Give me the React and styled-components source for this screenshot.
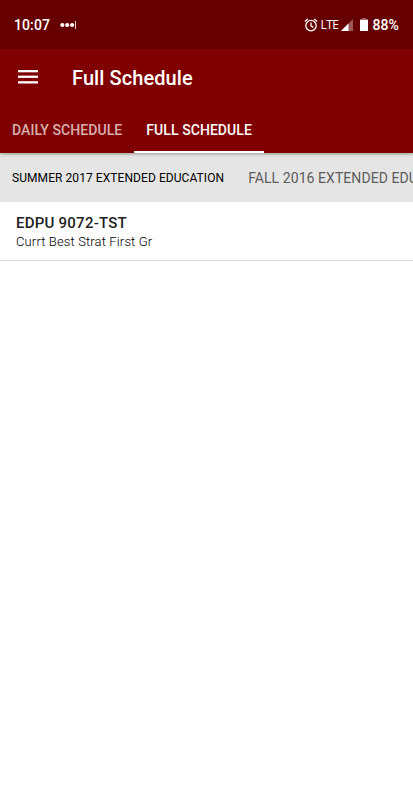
import React from 'react';
import styled, { createGlobalStyle } from 'styled-components';

const GlobalStyle = createGlobalStyle`
  * {
    box-sizing: border-box;
  }

  body {
    margin: 0;
    background: #ffffff;
    font-family: Roboto, "Liberation Sans", sans-serif;
  }
`;

const Screen = styled.div`
  display: flex;
  flex-direction: column;
  height: 800px;
  overflow: hidden;
  background: #ffffff;
`;

const StatusBar = styled.div`
  display: flex;
  align-items: center;
  height: 49px;
  flex-shrink: 0;
  padding: 1px 14px 0;
  background: #660000;
  color: #ffffff;
`;

const StatusText = styled.span`
  font-size: 14px;
  font-weight: 500;
  line-height: 16px;
  letter-spacing: 0.1px;
`;

const NotificationDots = styled.svg`
  margin: 0 0 1px 10px;
`;

const StatusIcons = styled.div`
  display: flex;
  align-items: center;
  margin-left: auto;
`;

const Alarm = styled.svg`
  margin-bottom: 1px;
`;

const Network = styled.span`
  margin: 0 3px 0 2px;
  font-family: "Open Sans", "Noto Sans", sans-serif;
  font-size: 12px;
  line-height: 16px;
  letter-spacing: -0.5px;
`;

const Battery = styled.svg`
  margin: 0 4px 1px 7px;
`;

const AppBar = styled.header`
  display: flex;
  align-items: center;
  height: 56px;
  flex-shrink: 0;
  padding: 0 18px;
  background: #800000;
`;

const MenuButton = styled.button`
  display: flex;
  width: 20px;
  height: 14px;
  padding: 0;
  border: none;
  background: none;
  cursor: pointer;
`;

const Title = styled.h1`
  margin: 1px 0 0 34px;
  color: #ffffff;
  font-size: 20px;
  font-weight: 500;
  line-height: 24px;
  letter-spacing: 0.08px;
`;

const Tabs = styled.nav`
  position: relative;
  display: flex;
  height: 48px;
  flex-shrink: 0;
  background: #800000;
  box-shadow: 0 1px 3px rgba(0, 0, 0, 0.35);
`;

const Tab = styled.button`
  height: 48px;
  padding: 4px 12px 0;
  border: none;
  border-bottom: 2px solid ${({ $active }) => ($active ? '#ffffff' : 'transparent')};
  background: none;
  color: ${({ $active }) => ($active ? '#ffffff' : 'rgba(255, 255, 255, 0.7)')};
  font-family: inherit;
  font-size: 14px;
  font-weight: 500;
  letter-spacing: 0.07px;
  white-space: nowrap;
  cursor: pointer;
`;

const Terms = styled.div`
  display: flex;
  height: 49px;
  flex-shrink: 0;
  overflow: hidden;
  background: #e5e5e5;
`;

const Term = styled.button`
  flex-shrink: 0;
  padding: 1px 12px 0;
  border: none;
  background: none;
  color: ${({ $active }) => ($active ? '#000000' : '#5c5c5c')};
  font-family: inherit;
  font-size: ${({ $active }) => ($active ? '12px' : '14px')};
  letter-spacing: 0.07px;
  white-space: nowrap;
  cursor: pointer;
`;

const Course = styled.div`
  height: 59px;
  padding: 12px 16px 0;
  border-bottom: 1px solid #d6d6d6;
`;

const CourseCode = styled.div`
  color: #212121;
  font-size: 15px;
  font-weight: 500;
  line-height: 18px;
  letter-spacing: 0.24px;
`;

const CourseName = styled.div`
  margin-top: 1px;
  color: #000000;
  font-size: 13px;
  font-weight: 300;
  line-height: 18px;
  letter-spacing: 0.14px;
`;

const tabs = ['DAILY SCHEDULE', 'FULL SCHEDULE'];
const terms = ['SUMMER 2017 EXTENDED EDUCATION', 'FALL 2016 EXTENDED EDUCATION'];
const courses = [{ code: 'EDPU 9072-TST', name: 'Currt Best Strat First Gr' }];

const App = () => {
  const [tab, setTab] = React.useState(1);
  const [term, setTerm] = React.useState(0);

  return (
    <Screen>
      <GlobalStyle />
      <StatusBar>
        <StatusText>10:07</StatusText>
        <NotificationDots width="16" height="8" viewBox="0 0 16 8" fill="#ffffff">
          <circle cx="2.3" cy="4" r="2.1" />
          <circle cx="7.2" cy="4" r="2.1" />
          <circle cx="12.1" cy="4" r="2.1" />
          <rect x="15" y="0" width="1" height="8" opacity="0.8" />
        </NotificationDots>
        <StatusIcons>
          <Alarm width="14" height="14" viewBox="0 0 14 14" fill="none" stroke="#ffffff" strokeWidth="1.3">
            <circle cx="7" cy="7.6" r="5.2" />
            <path d="M0.8 3.4 L3.8 0.9 M13.2 3.4 L10.2 0.9 M7 4.6 V7.8 L9.3 9.4" />
          </Alarm>
          <Network>LTE</Network>
          <svg width="12" height="12" viewBox="0 0 12 12">
            <path d="M0 12 L12 0 V12 Z" fill="#ffffff" opacity="0.35" />
            <path d="M0 12 L7.5 4.5 V12 Z" fill="#ffffff" />
          </svg>
          <Battery width="8" height="13" viewBox="0 0 8 13" fill="#ffffff">
            <path d="M2 0 H6 V1 H8 V2 H0 V1 H2 Z" opacity="0.4" />
            <rect x="0" y="2" width="8" height="11" />
          </Battery>
          <StatusText>88%</StatusText>
        </StatusIcons>
      </StatusBar>
      <AppBar>
        <MenuButton aria-label="Menu">
          <svg width="20" height="14" viewBox="0 0 20 14" fill="#ffffff">
            <rect x="0" y="0" width="20" height="2.3" />
            <rect x="0" y="5.6" width="20" height="2.3" />
            <rect x="0" y="11.2" width="20" height="2.3" />
          </svg>
        </MenuButton>
        <Title>Full Schedule</Title>
      </AppBar>
      <Tabs>
        {tabs.map((label, i) => (
          <Tab key={label} $active={i === tab} onClick={() => setTab(i)}>
            {label}
          </Tab>
        ))}
      </Tabs>
      <Terms>
        {terms.map((label, i) => (
          <Term key={label} $active={i === term} onClick={() => setTerm(i)}>
            {label}
          </Term>
        ))}
      </Terms>
      {courses.map((course) => (
        <Course key={course.code}>
          <CourseCode>{course.code}</CourseCode>
          <CourseName>{course.name}</CourseName>
        </Course>
      ))}
    </Screen>
  );
};

export default App;
